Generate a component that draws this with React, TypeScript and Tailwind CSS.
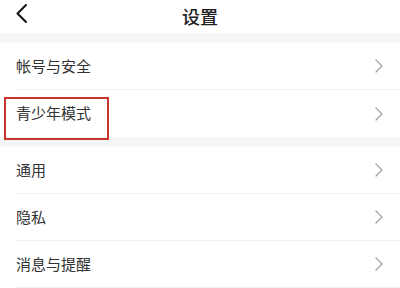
const font = { fontFamily: '"Noto Sans CJK SC", "Noto Sans", sans-serif' };

function Arrow() {
  return (
    <svg width="8" height="14" viewBox="0 0 8 14" fill="none" className="shrink-0">
      <polyline points="1,1 7,7 1,13" stroke="#a3a3a3" strokeWidth="1.3" strokeLinecap="round" strokeLinejoin="round" />
    </svg>
  );
}

function Row({ label, divider = true, highlight = false }: { label: string; divider?: boolean; highlight?: boolean }) {
  return (
    <div className="relative h-[47px] bg-white">
      <div className={`flex h-full items-center justify-between pr-[17px] ml-4 ${divider ? "border-b border-[#f0f0f0]" : ""}`}>
        <span className="text-[15px] text-[#333]">{label}</span>
        <Arrow />
      </div>
      {/* annotation box */}
      {highlight && (
        <div className="absolute left-[4px] top-[7px] w-[105px] h-[43px] border-2 border-[#c8332b] z-10" />
      )}
    </div>
  );
}

export default function App() {
  return (
    <div className="w-[400px] h-[288px] bg-white overflow-hidden" style={font}>
      <div className="relative flex h-[33px] items-center justify-center">
        <svg width="14" height="21" viewBox="0 0 14 21" fill="none" className="absolute left-[15px] top-[3px]">
          <polyline points="11,2 2.5,10.5 11,19" stroke="#111" strokeWidth="2" strokeLinecap="round" strokeLinejoin="round" />
        </svg>
        <span className="text-[18px] font-medium text-[#222]">设置</span>
      </div>
      <div className="h-[10px] bg-[#f6f6f6]" />
      <Row label="帐号与安全" />
      <Row label="青少年模式" divider={false} highlight />
      <div className="h-[10px] bg-[#f6f6f6]" />
      <Row label="通用" />
      <Row label="隐私" />
      <Row label="消息与提醒" />
    </div>
  );
}
